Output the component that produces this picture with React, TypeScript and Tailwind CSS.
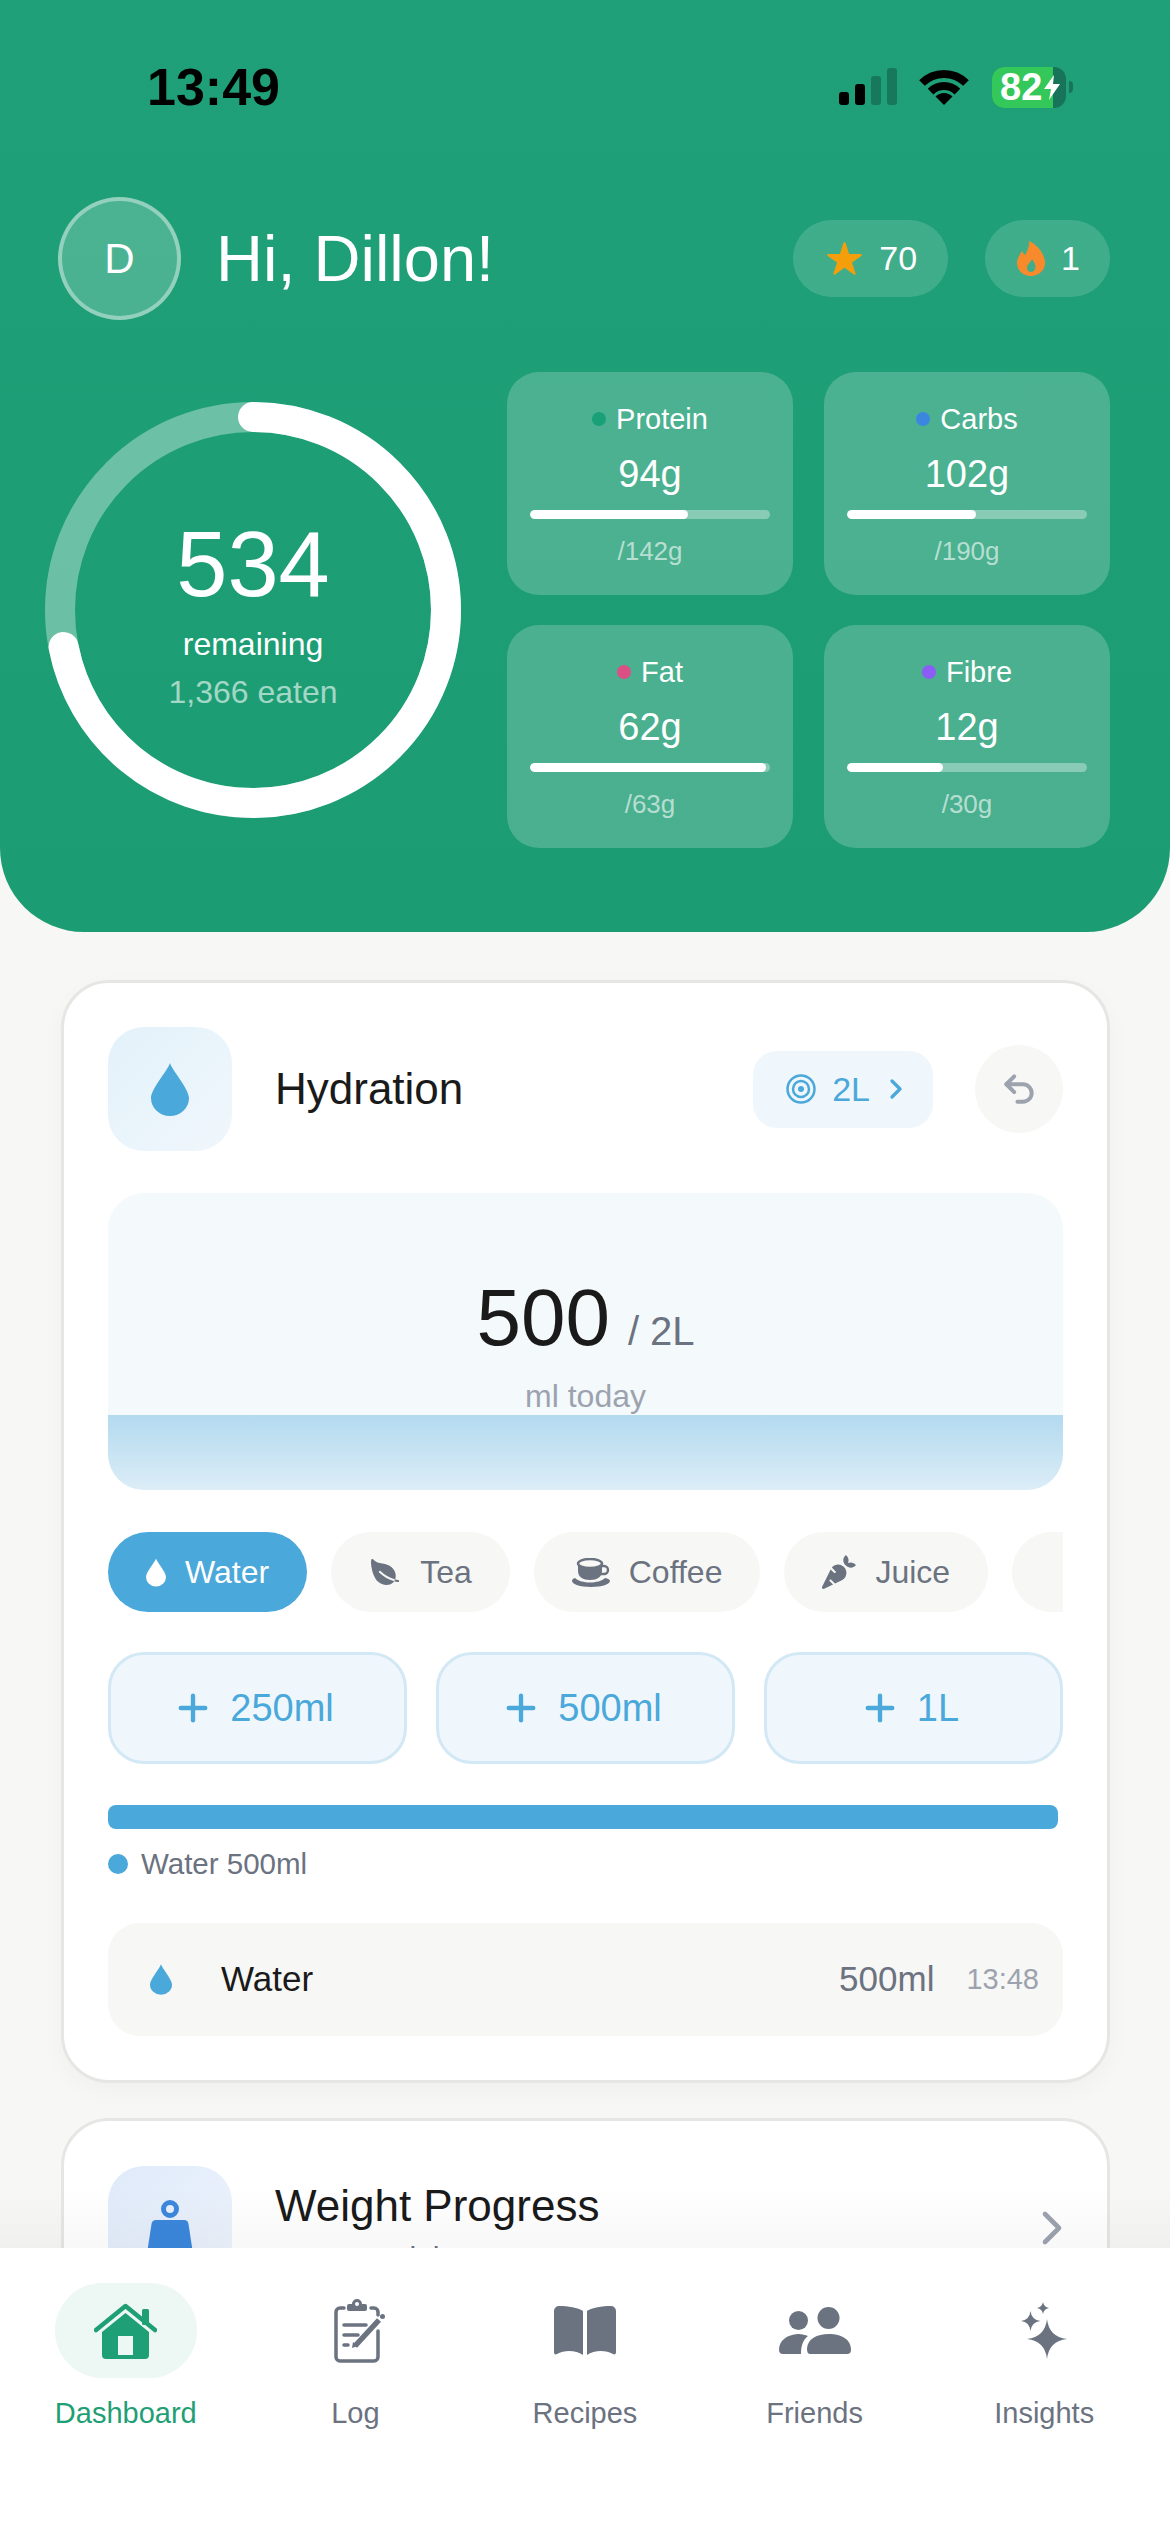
// App.tsx
import type { ReactNode } from 'react';
import { ChevronRight, Plus, Undo2 } from 'lucide-react';
import { FaCarrot } from 'react-icons/fa';
import { IoLeaf, IoStar } from 'react-icons/io5';

const macros = [
  { name: 'Protein', value: '94g', goal: '/142g', pct: 66, dot: '#18a078' },
  { name: 'Carbs', value: '102g', goal: '/190g', pct: 53.7, dot: '#3b87e0' },
  { name: 'Fat', value: '62g', goal: '/63g', pct: 98.4, dot: '#d94f86' },
  { name: 'Fibre', value: '12g', goal: '/30g', pct: 40, dot: '#8b5cf6' },
];

const Drop = ({ className }: { className: string }) => (
  <svg viewBox="0 0 38 53" className={className} fill="currentColor">
    <path d="M19 0C21 7 38 26 38 35A19 18 0 0 1 0 35C0 26 17 7 19 0Z" />
  </svg>
);

const Cup = () => (
  <svg viewBox="0 0 38 29" className="w-[38px] h-[29px]" fill="#6b7280">
    <path d="M6 6h24v7c0 6-5 9-12 9S6 19 6 13Z" />
    <ellipse cx="18" cy="5.5" rx="12" ry="4.5" fill="#f7f7f5" stroke="#6b7280" strokeWidth="2.5" />
    <path d="M29 8h3a3.5 3.5 0 0 1 0 8h-4" fill="none" stroke="#6b7280" strokeWidth="2.5" />
    <path d="M0 23c0-1.500 1-2.500 3-3 3 3 9 4.500 15 4.500s12-1.500 15-4.500c3 .5 5 1.500 5 3 0 3-8 6-19 6S0 26 0 23Z" />
  </svg>
);

const Wifi = () => (
  <svg viewBox="0 0 50 38" className="w-[50px] h-[38px]" fill="none" stroke="#000" strokeWidth="8">
    <path d="M3 15A31.100 31.100 0 0 1 47 15" />
    <path d="M11.600 23.600A19 19 0 0 1 38.400 23.600" />
    <path d="M25 37 16.500 28.500A12 12 0 0 1 33.500 28.500Z" fill="#000" stroke="none" />
  </svg>
);

const Flame = () => (
  <svg viewBox="0 0 28 35" className="w-[28px] h-[35px]" fill="#f98a2b">
    <path
      fillRule="evenodd"
      d="M12 0c7 3 15 11 16 21 .6 8-6 14-14 14S0 29 0 22c0-5 3-8 5-12 1 2 2 3 3.500 4C10 10 13 5 12 0Zm3 18c-1 3-5 5-5 9 0 2.500 2 4 4 4s4.500-1.500 4.500-5c0-3-2-6-3.500-8Z"
    />
  </svg>
);

const Target = () => (
  <svg viewBox="0 0 30 30" className="w-[30px] h-[30px]" fill="none" stroke="#4aa8da" strokeWidth="2.500">
    <circle cx="15" cy="15" r="13.500" />
    <circle cx="15" cy="15" r="8" />
    <circle cx="15" cy="15" r="3" fill="#4aa8da" stroke="none" />
  </svg>
);

const Kettlebell = () => (
  <svg viewBox="0 0 48 68" className="w-[48px] h-[68px]">
    <circle cx="24" cy="9" r="6.500" fill="none" stroke="#3b87dc" strokeWidth="5" />
    <path d="M10 20h28c3 0 4 2 4.500 4L48 60c.5 4-2 8-6 8H6c-4 0-6.500-4-6-8l5.500-36c.5-2 1.500-4 4.500-4Z" fill="#3b87dc" />
  </svg>
);

const HomeIcon = () => (
  <svg viewBox="0 0 63 56" className="w-[63px] h-[56px]" fill="#1f9f75">
    <path d="M2 27 31.500 3 61 27" fill="none" stroke="#1f9f75" strokeWidth="4.500" strokeLinecap="round" strokeLinejoin="round" />
    <rect x="48" y="6" width="7" height="16" rx="1.500" />
    <path d="M31.500 10 55 29v23a4 4 0 0 1-4 4H12a4 4 0 0 1-4-4V29Z" />
    <rect x="24" y="33" width="15" height="19" fill="#edf7f3" />
  </svg>
);

const LogIcon = () => (
  <svg viewBox="0 0 52 64" className="w-[52px] h-[64px] ml-[10px]" fill="none" stroke="#6b7280" strokeWidth="3.500" strokeLinecap="round">
    <path d="M10 9H6a4 4 0 0 0-4 4v45a4 4 0 0 0 4 4h34a4 4 0 0 0 4-4V32" />
    <path d="M37 9h3a4 4 0 0 1 4 4v3" />
    <path d="M13 10V7a2 2 0 0 1 2-2h3a5 5 0 0 1 10 0h3a2 2 0 0 1 2 2v3a2 2 0 0 1-2 2H15a2 2 0 0 1-2-2Z" fill="#6b7280" stroke="none" />
    <circle cx="23" cy="5" r="2" fill="#fff" stroke="none" />
    <path d="M10 26h22M10 36h14M10 46h4" />
    <path d="M21 47 45 21" strokeWidth="5.500" strokeLinecap="butt" />
    <path d="M18 49l1-6 5 4Z" fill="#6b7280" stroke="none" />
    <circle cx="48.500" cy="17.500" r="2.500" fill="#6b7280" stroke="none" />
  </svg>
);

const BookIcon = () => (
  <svg viewBox="0 0 62 49" className="w-[62px] h-[49px]" fill="#6b7280">
    <path d="M29 5C24 1.500 14 0 5 0A5 5 0 0 0 0 5v41c0 2 1 3 3 2 7-4 19-4 26 1Z" />
    <path d="M33 5C38 1.500 48 0 57 0a5 5 0 0 1 5 5v41c0 2-1 3-3 2-7-4-19-4-26 1Z" />
  </svg>
);

const FriendsIcon = () => (
  <svg viewBox="0 0 72 47" className="w-[72px] h-[47px]" fill="#6b7280">
    <circle cx="19.500" cy="13.500" r="9.500" />
    <circle cx="49.500" cy="11" r="11" />
    <path d="M28 42c0-10 10-15 22-15s22 5 22 16c0 3-2 4-4 4H31c-2 0-3-2-3-5Z" />
    <path d="M0 43c0-10 8-15 19-16 3 0 8 1 10 2-4 3-7 8-7 18H4c-3 0-4-2-4-4Z" />
  </svg>
);

const SparklesIcon = () => (
  <svg viewBox="0 0 46 57" className="w-[46px] h-[57px]" fill="#6b7280">
    <path d="M26 17Q28 35 46 37 28 39 26 57 24 39 6 37 24 35 26 17Z" />
    <path d="M9.500 9Q10.500 18 19.500 19 10.500 20 9.500 29 8.500 20 0 19 8.500 18 9.500 9Z" />
    <path d="M22 0Q22.800 5.200 28 6 22.800 6.800 22 12 21.200 6.800 16 6 21.200 5.200 22 0Z" />
  </svg>
);

const Chip = ({ icon, label, active }: { icon?: ReactNode; label?: string; active?: boolean }) => (
  <div
    className={`h-[80px] shrink-0 rounded-full px-[38px] flex items-center gap-[19px] text-[32px] ${
      active ? 'bg-[#4aa8da] text-white' : 'bg-[#f7f7f5] text-[#6b7280]'
    }`}
  >
    {icon}
    {label}
  </div>
);

const AddButton = ({ label }: { label: string }) => (
  <div className="h-[112px] rounded-[36px] border-[3px] border-[#d3e8f5] bg-[#f0f7fc] flex items-center justify-center gap-[25px] text-[38px] text-[#4aa8da]">
    <Plus size={42} strokeWidth={2.500} className="mx-[-9px]" />
    {label}
  </div>
);

const StatusBar = () => (
  <div className="h-[174px] pl-[147px] pr-[97px] flex items-center justify-between">
    <span className="text-[52px] font-bold text-black">13:49</span>
    <div className="flex items-center">
      <div className="flex items-end gap-[6px] h-[38px] mt-[-2px]">
        <div className="w-[10px] h-[13px] rounded-[3px] bg-black" />
        <div className="w-[10px] h-[21px] rounded-[3px] bg-black" />
        <div className="w-[10px] h-[29px] rounded-[3px] bg-black/25" />
        <div className="w-[10px] h-[37px] rounded-[3px] bg-black/25" />
      </div>
      <div className="ml-[22px] mr-[23px] flex">
        <Wifi />
      </div>
      <div className="flex items-center gap-[3px]">
        <div className="relative w-[74px] h-[41px] rounded-[12px] overflow-hidden bg-[#17735a] flex">
          <div className="w-[61px] bg-[#34c759] pl-[8px] text-[38px] leading-[41px] font-bold text-white">82</div>
          <svg viewBox="0 0 16 25" className="absolute left-[52px] top-[8px] w-[16px] h-[25px]" fill="#fff">
            <path d="M10 0 0 14h7L5 25 16 9H9Z" />
          </svg>
        </div>
        <div className="w-[4px] h-[12px] rounded-r-full bg-[#17735a]" />
      </div>
    </div>
  </div>
);

const Ring = () => {
  // 1366 of 1900 kcal eaten
  const r = 193;
  const circumference = 2 * Math.PI * r;
  return (
    <div className="relative w-[416px] h-[416px] shrink-0">
      <svg viewBox="0 0 416 416" className="w-[416px] h-[416px] -rotate-90">
        <circle cx="208" cy="208" r={r} fill="none" stroke="#fff" strokeOpacity="0.35" strokeWidth="30" />
        <circle
          cx="208"
          cy="208"
          r={r}
          fill="none"
          stroke="#fff"
          strokeWidth="30"
          strokeLinecap="round"
          strokeDasharray={`${circumference * 0.719} ${circumference}`}
        />
      </svg>
      <div className="absolute inset-0 flex flex-col items-center pt-[112px] text-white">
        <span className="text-[92px] leading-[100px]">534</span>
        <span className="text-[32px] leading-[40px] mt-[10px]">remaining</span>
        <span className="text-[32px] leading-[40px] mt-[8px] text-white/60">1,366 eaten</span>
      </div>
    </div>
  );
};

const Header = () => (
  <div className="bg-linear-to-b from-[#20a078] to-[#1c9c72] rounded-b-[84px] h-[932px] pl-[45px] pr-[60px]">
    <div className="ml-[-45px] mr-[-60px]">
      <StatusBar />
    </div>
    <div className="mt-[23px] ml-[13px] flex items-center justify-between">
      <div className="flex items-center gap-[35px]">
        <div className="w-[123px] h-[123px] rounded-full bg-white/20 border-[4px] border-white/40 flex items-center justify-center text-[42px] text-white">
          D
        </div>
        <span className="text-[65px] text-white">Hi, Dillon!</span>
      </div>
      <div className="flex items-center gap-[37px] text-[34px] text-white">
        <div className="h-[77px] pl-[33px] pr-[31px] rounded-full bg-white/15 flex items-center gap-[16px]">
          <IoStar size={37} color="#f59e0b" />
          70
        </div>
        <div className="h-[77px] pl-[32px] pr-[30px] rounded-full bg-white/15 flex items-center gap-[16px]">
          <Flame />
          1
        </div>
      </div>
    </div>
    <div className="mt-[52px] flex items-center justify-between">
      <Ring />
      <div className="grid grid-cols-[286px_286px] gap-x-[31px] gap-y-[30px]">
        {macros.map((m) => (
          <div key={m.name} className="h-[223px] rounded-[32px] bg-white/20 px-[23px] pt-[30px] flex flex-col items-center text-white">
            <div className="flex items-center gap-[10px] text-[29px] leading-[34px]">
              <span className="w-[14px] h-[14px] rounded-full" style={{ backgroundColor: m.dot }} />
              {m.name}
            </div>
            <span className="mt-[16px] text-[38px] leading-[44px]">{m.value}</span>
            <div className="mt-[14px] w-full h-[9px] rounded-full bg-white/35 overflow-hidden">
              <div className="h-full rounded-full bg-white" style={{ width: `${m.pct}%` }} />
            </div>
            <span className="mt-[16px] text-[26px] leading-[32px] text-white/60">{m.goal}</span>
          </div>
        ))}
      </div>
    </div>
  </div>
);

const HydrationCard = () => (
  <div className="bg-white rounded-[48px] border-[3px] border-[#e6e6e4] px-[44px] pt-[44px] pb-[44px] shadow-[0_8px_24px_rgba(0,0,0,0.03)]">
    <div className="flex items-center">
      <div className="w-[124px] h-[124px] rounded-[36px] bg-linear-to-br from-[#e3f1fa] to-[#f0f7fc] flex items-center justify-center text-[#4aa8da]">
        <Drop className="w-[38px] h-[53px]" />
      </div>
      <span className="ml-[43px] text-[44px] text-[#1a1a1a]">Hydration</span>
      <div className="ml-auto h-[77px] rounded-[24px] bg-[#f0f7fc] pl-[33px] pr-[21px] flex items-center text-[34px] text-[#4aa8da]">
        <Target />
        <span className="ml-[16px]">2L</span>
        <ChevronRight size={32} strokeWidth={2.500} className="ml-[10px]" />
      </div>
      <div className="ml-[42px] w-[88px] h-[88px] rounded-full bg-[#f7f7f5] flex items-center justify-center">
        <Undo2 size={38} color="#9ca3af" strokeWidth={2.500} />
      </div>
    </div>

    <div className="relative mt-[42px] h-[297px] rounded-[36px] bg-[#f4f9fc] overflow-hidden flex flex-col items-center pt-[80px]">
      <div className="flex items-baseline gap-[18px]">
        <span className="text-[80px] leading-[90px] text-[#1a1a1a]">500</span>
        <span className="text-[40px] leading-[90px] text-[#6b7280]">/ 2L</span>
      </div>
      <span className="text-[32px] leading-[40px] text-[#9ca3af]">ml today</span>
      <div className="absolute left-0 right-0 bottom-0 h-[75px] bg-linear-to-b from-[#b3daef] to-[#dcedf7]" />
    </div>

    <div className="mt-[42px] flex gap-[24px] overflow-hidden">
      <Chip active label="Water" icon={<Drop className="w-[20px] h-[29px]" />} />
      <Chip label="Tea" icon={<IoLeaf size={32} />} />
      <Chip label="Coffee" icon={<Cup />} />
      <Chip label="Juice" icon={<FaCarrot size={34} />} />
      <div className="h-[80px] w-[200px] shrink-0 rounded-full bg-[#f7f7f5]" />
    </div>

    <div className="mt-[40px] grid grid-cols-3 gap-[29px]">
      <AddButton label="250ml" />
      <AddButton label="500ml" />
      <AddButton label="1L" />
    </div>

    <div className="mt-[41px] mr-[5px] h-[24px] rounded-[8px] bg-[#4aa8da]" />
    <div className="mt-[19px] flex items-center gap-[13px] text-[29.5px] leading-[32px] text-[#6b7280]">
      <span className="w-[20px] h-[20px] rounded-full bg-[#4aa8da]" />
      Water 500ml
    </div>

    <div className="mt-[43px] h-[113px] rounded-[32px] bg-[#f7f7f5] pl-[42px] pr-[24px] flex items-center">
      <Drop className="w-[22px] h-[33px] text-[#4aa8da]" />
      <span className="ml-[49px] text-[35px] text-[#1a1a1a]">Water</span>
      <span className="ml-auto text-[35px] text-[#6b7280]">500ml</span>
      <span className="ml-[32px] text-[29px] text-[#9ca3af]">13:48</span>
    </div>
  </div>
);

const WeightCard = () => (
  <div className="mt-[35px] bg-white rounded-t-[48px] border-[3px] border-[#e6e6e4] px-[44px] pt-[45px] pb-[44px]">
    <div className="flex items-center">
      <div className="w-[124px] h-[124px] rounded-[36px] bg-linear-to-br from-[#dfeafa] to-[#eef4fc] flex justify-center pt-[34px] overflow-hidden">
        <Kettlebell />
      </div>
      <div className="ml-[43px] flex flex-col">
        <span className="text-[44px] leading-[52px] text-[#1a1a1a]">Weight Progress</span>
        <span className="mt-[8px] text-[30px] leading-[36px] text-[#6b7280]">Latest Weight</span>
      </div>
      <ChevronRight size={56} color="#9ca3af" strokeWidth={2} className="ml-auto mr-[-17px]" />
    </div>
  </div>
);

const NavItem = ({ icon, label, active }: { icon: ReactNode; label: string; active?: boolean }) => (
  <div className="flex flex-col items-center">
    <div className={`w-[142px] h-[95px] rounded-[48px] flex items-center justify-center ${active ? 'bg-[#edf7f3]' : ''}`}>{icon}</div>
    <span className={`mt-[17px] text-[29px] leading-[36px] ${active ? 'text-[#1f9f75]' : 'text-[#6b7280]'}`}>{label}</span>
  </div>
);

export default function App() {
  return (
    <div className="w-[1170px] h-[2532px] flex flex-col overflow-hidden bg-[#f7f7f5] [font-family:'Liberation_Sans',Arial,sans-serif]">
      <div className="relative flex-1 min-h-0 overflow-hidden">
        <Header />
        <div className="pt-[48px] pl-[61px] pr-[60px]">
          <HydrationCard />
          <WeightCard />
        </div>
        <div className="absolute left-0 right-0 bottom-0 h-[60px] bg-linear-to-b from-transparent to-black/[0.03]" />
      </div>
      <nav className="h-[284px] shrink-0 bg-white px-[11px] pt-[35px] grid grid-cols-5 content-start">
        <NavItem active label="Dashboard" icon={<HomeIcon />} />
        <NavItem label="Log" icon={<LogIcon />} />
        <NavItem label="Recipes" icon={<BookIcon />} />
        <NavItem label="Friends" icon={<FriendsIcon />} />
        <NavItem label="Insights" icon={<SparklesIcon />} />
      </nav>
    </div>
  );
}
